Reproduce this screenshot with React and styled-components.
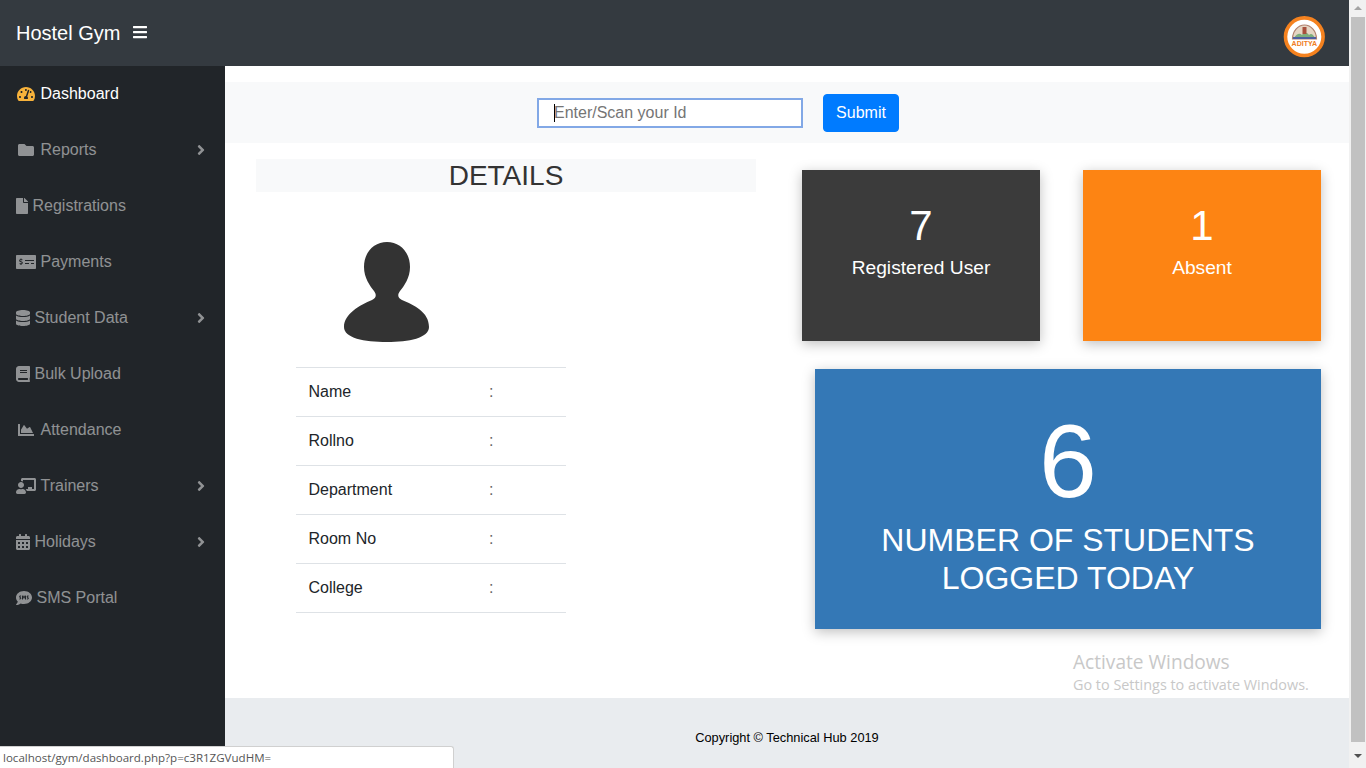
import React from "react";
import styled, { createGlobalStyle } from "styled-components";
import {
  FaAngleRight,
  FaBars,
  FaBook,
  FaCalendarAlt,
  FaChalkboardTeacher,
  FaChartArea,
  FaDatabase,
  FaFile,
  FaFolder,
  FaMoneyCheckAlt,
  FaSms,
  FaTachometerAlt,
} from "react-icons/fa";

// w is the icon's natural width at 16px high
const menu = [
  { label: "Dashboard", icon: FaTachometerAlt, w: 18, fw: true, active: true },
  { label: "Reports", icon: FaFolder, w: 16, fw: true, arrow: true },
  { label: "Registrations", icon: FaFile, w: 12 },
  { label: "Payments", icon: FaMoneyCheckAlt, w: 20 },
  { label: "Student Data", icon: FaDatabase, w: 14, arrow: true },
  { label: "Bulk Upload", icon: FaBook, w: 14 },
  { label: "Attendance", icon: FaChartArea, w: 16, fw: true },
  { label: "Trainers", icon: FaChalkboardTeacher, w: 20, arrow: true },
  { label: "Holidays", icon: FaCalendarAlt, w: 14, arrow: true },
  { label: "SMS Portal", icon: FaSms, w: 16 },
];

const fields = ["Name", "Rollno", "Department", "Room No", "College"];

const App = () => {
  return (
    <Screen>
      <GlobalStyle />
      <Page>
        <TopBar>
          <Brand>Hostel Gym</Brand>
          <BarsButton>
            <FaBars />
          </BarsButton>
          <Logo />
        </TopBar>
        <Body>
          <Sidebar>
            {menu.map((item) => (
              <MenuItem key={item.label} $active={item.active}>
                <IconSlot $w={item.w} $fw={item.fw} $active={item.active}>
                  <item.icon />
                </IconSlot>
                <span>{item.label}</span>
                {item.arrow && (
                  <Arrow>
                    <FaAngleRight />
                  </Arrow>
                )}
              </MenuItem>
            ))}
          </Sidebar>
          <Main>
            <ScanBar>
              <InputWrap>
                <ScanInput placeholder="Enter/Scan your Id" readOnly />
                <Caret />
              </InputWrap>
              <SubmitButton>Submit</SubmitButton>
            </ScanBar>
            <Content>
              <DetailsColumn>
                <DetailsTitle>DETAILS</DetailsTitle>
                <Avatar viewBox="0 0 86 100">
                  <path d="M43 0C56 0 66 10 66 25C66 36 60 44 56 49C53 53 54 56 58 58C70 63 85 70 85 85C85 96 65 100 43 100C20 100 0 96 0 85C0 72 16 63 28 58C32 56 33 53 30 49C26 44 20 36 20 25C20 10 30 0 43 0Z" />
                </Avatar>
                <FieldList>
                  {fields.map((field) => (
                    <FieldRow key={field}>
                      <FieldName>{field}</FieldName>
                      <FieldColon>:</FieldColon>
                    </FieldRow>
                  ))}
                </FieldList>
              </DetailsColumn>
              <StatsColumn>
                <SmallCards>
                  <StatCard $bg="#3b3b3b">
                    <StatNumber>7</StatNumber>
                    <StatLabel>Registered User</StatLabel>
                  </StatCard>
                  <StatCard $bg="#fd8413">
                    <StatNumber>1</StatNumber>
                    <StatLabel>Absent</StatLabel>
                  </StatCard>
                </SmallCards>
                <BigCard>
                  <BigNumber>6</BigNumber>
                  <BigLabel>
                    NUMBER OF STUDENTS
                    <br />
                    LOGGED TODAY
                  </BigLabel>
                </BigCard>
              </StatsColumn>
            </Content>
            <Footer>Copyright © Technical Hub 2019</Footer>
          </Main>
        </Body>
      </Page>
      <Scrollbar>
        <ScrollUp />
        <ScrollThumb />
        <ScrollDown />
      </Scrollbar>
      <Watermark>
        <WatermarkTitle>Activate Windows</WatermarkTitle>
        <WatermarkText>Go to Settings to activate Windows.</WatermarkText>
      </Watermark>
      <StatusLink>localhost/gym/dashboard.php?p=c3R1ZGVudHM=</StatusLink>
    </Screen>
  );
};

const Logo = () => (
  <LogoSvg viewBox="0 0 42 42">
    <circle cx="21.3" cy="20.7" r="18.8" fill="#fff" stroke="#f5821f" strokeWidth="3.6" />
    <path d="M9.5 23a12 14 0 0 1 24 0z" fill="#e6d6c4" stroke="#b0806e" strokeWidth="1.2" />
    <path d="M11 22c3-5 6-5 8-3c2-3 5-3 7 0c2-2 4-1 6 3z" fill="#7fae7c" />
    <rect x="19.5" y="11" width="4" height="7" fill="#a8503c" />
    <rect x="10" y="21" width="23" height="2" fill="#4f60a0" />
    <LogoText x="21.3" y="30" textAnchor="middle">
      ADITYA
    </LogoText>
  </LogoSvg>
);

export default App;

const GlobalStyle = createGlobalStyle`
  html, body {
    margin: 0;
    padding: 0;
    height: 100%;
    overflow: hidden;
  }
  body {
    font-family: "Liberation Sans", Arial, sans-serif;
    font-size: 16px;
    color: #212529;
    background: #fff;
  }
  * {
    box-sizing: border-box;
  }
`;

const Screen = styled.div`
  position: relative;
  display: flex;
  width: 100vw;
  height: 100vh;
  overflow: hidden;
`;

const Page = styled.div`
  flex: 1;
  min-width: 0;
  display: flex;
  flex-direction: column;
`;

const TopBar = styled.header`
  flex: 0 0 66px;
  display: flex;
  align-items: center;
  padding: 0 24px 0 16px;
  background: #343a40;
  color: #fff;
`;

const Brand = styled.div`
  font-size: 20px;
  line-height: 30px;
  margin-top: -1px;
`;

const BarsButton = styled.div`
  display: flex;
  margin-left: 13px;
  margin-top: -3px;

  svg {
    width: 14px;
    height: 16px;
  }
`;

const LogoSvg = styled.svg`
  width: 42px;
  height: 42px;
  margin-left: auto;
  margin-top: 8px;
`;

const LogoText = styled.text`
  font-family: "Liberation Sans", Arial, sans-serif;
  font-size: 7px;
  font-weight: 700;
  fill: #ef7d22;
`;

const Body = styled.div`
  flex: 1;
  min-height: 0;
  display: flex;
`;

const Sidebar = styled.nav`
  flex: 0 0 225px;
  background: #212529;
`;

const MenuItem = styled.div`
  display: flex;
  align-items: center;
  height: 56px;
  padding: 0 20px 0 16px;
  color: ${(p) => (p.$active ? "#fff" : "rgba(255, 255, 255, 0.5)")};
  line-height: 24px;
`;

const IconSlot = styled.span`
  display: inline-flex;
  justify-content: center;
  flex: 0 0 auto;
  width: ${(p) => (p.$fw ? 20 : p.$w)}px;
  margin-right: 4.5px;
  color: ${(p) => (p.$active ? "#f7b23b" : "inherit")};

  svg {
    width: ${(p) => p.$w}px;
    height: 16px;
  }
`;

const Arrow = styled.span`
  display: flex;
  margin-left: auto;

  svg {
    width: 8px;
    height: 16px;
  }
`;

const Main = styled.main`
  flex: 1;
  min-width: 0;
  display: flex;
  flex-direction: column;
  padding-top: 16px;
`;

const ScanBar = styled.div`
  flex: 0 0 61px;
  display: flex;
  align-items: center;
  gap: 20px;
  padding-left: 312px;
  background: #f8f9fa;
`;

const InputWrap = styled.div`
  position: relative;
  display: flex;
`;

const ScanInput = styled.input`
  width: 266px;
  height: 30px;
  padding: 0 15px;
  border: 2px solid #82a8e6;
  outline: none;
  background: #fff;
  font-family: "Liberation Sans", Arial, sans-serif;
  font-size: 16px;

  &::placeholder {
    color: #757575;
    opacity: 1;
  }
`;

const Caret = styled.span`
  position: absolute;
  left: 17px;
  top: 6px;
  width: 1px;
  height: 18px;
  background: #000;
`;

const SubmitButton = styled.button`
  width: 76px;
  height: 38px;
  padding: 0;
  border: 1px solid #007bff;
  border-radius: 4px;
  background: #007bff;
  color: #fff;
  font-family: "Liberation Sans", Arial, sans-serif;
  font-size: 16px;
`;

const Content = styled.div`
  flex: 1;
  min-height: 0;
  display: flex;
`;

const DetailsColumn = styled.section`
  flex: 0 0 500px;
  margin: 16px 0 0 31px;
`;

const DetailsTitle = styled.h3`
  margin: 0;
  height: 33px;
  background: #f8f9fa;
  color: #333;
  font-size: 28px;
  font-weight: 400;
  line-height: 33px;
  text-align: center;
`;

const Avatar = styled.svg`
  display: block;
  width: 86px;
  height: 100px;
  margin: 50px 0 0 88px;
  fill: #333;
`;

const FieldList = styled.div`
  width: 270px;
  margin: 25px 0 0 40px;
  border-bottom: 1px solid #dee2e6;
`;

const FieldRow = styled.div`
  display: flex;
  align-items: center;
  height: 49px;
  padding-left: 12.5px;
  border-top: 1px solid #dee2e6;
`;

const FieldName = styled.span`
  width: 180.5px;
`;

const FieldColon = styled.span`
  color: #666;
`;

const StatsColumn = styled.section`
  flex: 1;
  padding: 27px 28px 0 46px;
`;

const SmallCards = styled.div`
  display: flex;
  justify-content: space-between;
`;

const StatCard = styled.div`
  width: 238px;
  height: 171px;
  padding-top: 32px;
  background: ${(p) => p.$bg};
  color: #fff;
  text-align: center;
  box-shadow: 0 3px 12px rgba(0, 0, 0, 0.25);
`;

const StatNumber = styled.div`
  font-size: 42px;
  line-height: 48px;
`;

const StatLabel = styled.div`
  margin-top: 5px;
  font-size: 19.2px;
  line-height: 26px;
`;

const BigCard = styled.div`
  height: 260px;
  margin: 28px 0 0 13px;
  padding-top: 32px;
  background: #3478b6;
  color: #fff;
  text-align: center;
  box-shadow: 0 3px 12px rgba(0, 0, 0, 0.25);
`;

const BigNumber = styled.div`
  font-size: 104px;
  line-height: 120px;
`;

const BigLabel = styled.div`
  font-size: 32px;
  line-height: 38px;
`;

const Footer = styled.footer`
  flex: 0 0 70px;
  padding-top: 31px;
  background: #e9ecef;
  color: #000;
  font-size: 12.8px;
  line-height: 18px;
  text-align: center;
`;

const Scrollbar = styled.div`
  flex: 0 0 17px;
  display: flex;
  flex-direction: column;
  align-items: center;
  background: #f1f1f1;
`;

const ScrollUp = styled.div`
  width: 0;
  height: 0;
  margin: 6px 0 7px;
  border: 4px solid transparent;
  border-top: 0;
  border-bottom: 4px solid #a3a3a3;
  box-sizing: content-box;
`;

const ScrollThumb = styled.div`
  flex: 0 0 725px;
  width: 14px;
  background: #c1c1c1;
`;

const ScrollDown = styled.div`
  width: 0;
  height: 0;
  margin-top: 12px;
  border: 4px solid transparent;
  border-bottom: 0;
  border-top: 4px solid #505050;
`;

const Watermark = styled.div`
  position: absolute;
  left: 1073px;
  top: 650px;
  font-family: "Open Sans", sans-serif;
  color: #c8c8c8;
  pointer-events: none;
`;

const WatermarkTitle = styled.div`
  font-size: 19.1px;
  line-height: 24px;
`;

const WatermarkText = styled.div`
  font-size: 14.4px;
  line-height: 22px;
`;

const StatusLink = styled.div`
  position: absolute;
  left: 0;
  bottom: 0;
  width: 454px;
  height: 22px;
  padding: 3px 0 0 3px;
  border: 1px solid #d0d0d0;
  border-left: 0;
  border-bottom: 0;
  border-top-right-radius: 3px;
  background: #fff;
  font-family: "Open Sans", sans-serif;
  font-size: 11.55px;
  line-height: 16px;
  color: #555;
`;
